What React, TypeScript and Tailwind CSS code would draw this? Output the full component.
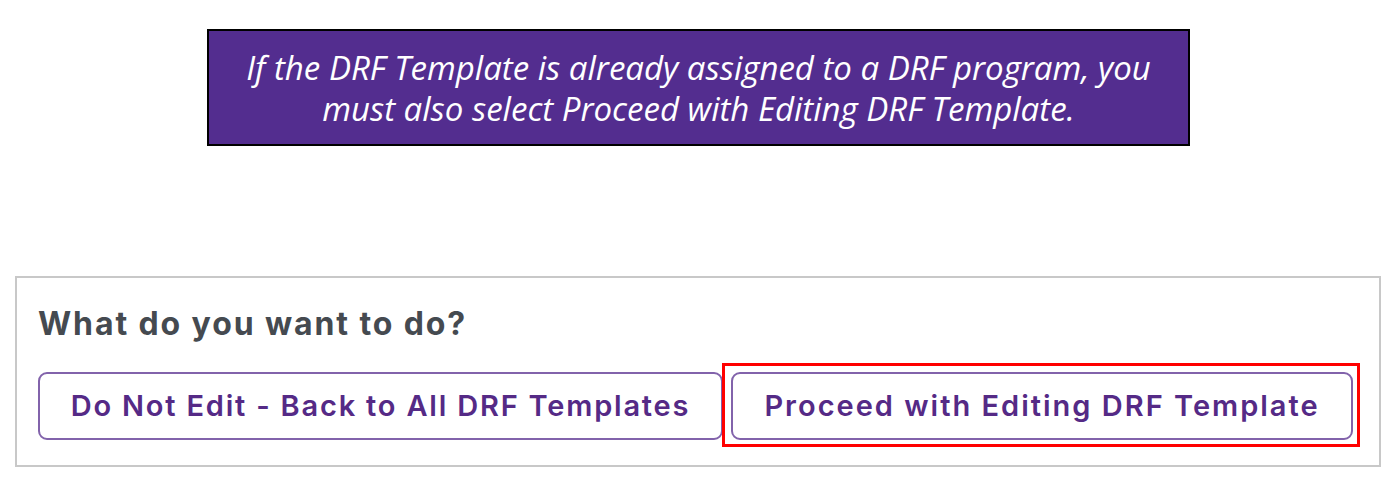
export default function App() {
  return (
    <div className="w-[1394px] h-[482px] bg-white relative overflow-hidden">
      <div className="pt-[29px] pl-[207px]">
        <div className="w-[983px] h-[117px] bg-[#532d8f] border-2 border-black flex flex-col items-center justify-center">
          <p className="text-white italic font-medium text-[33px] leading-[41px] text-center font-['Open_Sans',sans-serif]">
            If the DRF Template is already assigned to a DRF program, you
            <br />
            must also select Proceed with Editing DRF Template.
          </p>
        </div>
      </div>
      <div className="mt-[130px] ml-[15px] w-[1366px] h-[191px] border-2 border-[#c8c8c8] pl-[21px] pt-[26px]">
        <h2 className="text-[32px] leading-[40px] font-bold tracking-[1.9px] text-[#454a50] font-['Inter',sans-serif]">
          What do you want to do?
        </h2>
        <div className="flex gap-[8px] mt-[28px]">
          <button className="w-[685px] h-[68px] border-2 border-[#8263ab] rounded-[9px] text-[29px] font-semibold tracking-[1.8px] text-[#552a86] font-['Inter',sans-serif]">
            Do Not Edit - Back to All DRF Templates
          </button>
          <div className="relative">
            <button className="w-[622px] h-[68px] border-2 border-[#8263ab] rounded-[9px] text-[29px] font-semibold tracking-[2px] text-[#552a86] font-['Inter',sans-serif]">
              Proceed with Editing DRF Template
            </button>
            <div className="absolute -left-[9px] -top-[9px] -right-[7px] -bottom-[7px] border-[3px] border-[#ff0000] pointer-events-none" />
          </div>
        </div>
      </div>
    </div>
  )
}
